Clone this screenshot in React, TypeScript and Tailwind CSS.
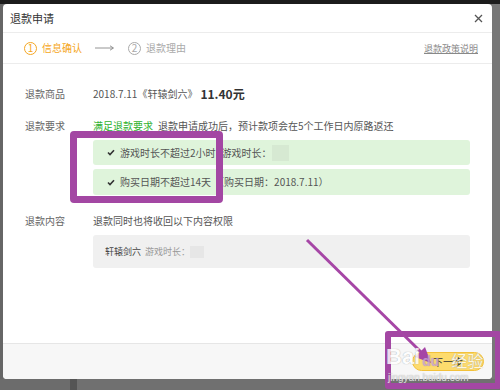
import React from "react";

function Check() {
  return (
    <svg width="8" height="7" viewBox="0 0 8 7" className="shrink-0">
      <polyline points="1,3.5 3,5.5 7,1.2" fill="none" stroke="#333" strokeWidth="1.6" />
    </svg>
  );
}

export default function App() {
  return (
    <div className="relative w-[500px] h-[390px] overflow-hidden bg-[#717171] flex flex-col font-['Noto_Sans_CJK_SC','Liberation_Sans',sans-serif]">
      <div className="h-[4px] bg-[#1c1c1c] shrink-0" />
      <div className="flex shrink-0">
        <div className="w-[3px] bg-[#666]" />
        <div className="w-[489px] h-[375px] bg-white rounded-[4px] flex flex-col overflow-hidden">
          {/* header */}
          <div className="h-[29px] flex items-center justify-between pl-[7px] pr-[9px] border-b border-[#ececec] shrink-0">
            <span className="text-[11px] text-[#333] leading-none">退款申请</span>
            <svg width="9" height="9" viewBox="0 0 9 9">
              <path d="M1 1 L8 8 M8 1 L1 8" stroke="#555" strokeWidth="1.3" />
            </svg>
          </div>
          {/* steps */}
          <div className="h-[31px] flex items-center pl-[21px] pr-[14px] border-b border-[#ececec] shrink-0">
            <div className="flex items-center text-[#f5a623]">
              <span className="w-[13px] h-[13px] rounded-full border border-[#f5a623] flex items-center justify-center text-[10px] leading-none">1</span>
              <span className="ml-[5px] text-[10px] leading-none">信息确认</span>
            </div>
            <svg width="20" height="6" viewBox="0 0 20 6" className="ml-[13px]">
              <path d="M0 3 H18 M15 0.8 L18.5 3 L15 5.2" fill="none" stroke="#888" strokeWidth="0.9" />
            </svg>
            <div className="flex items-center text-[#aaa] ml-[13px]">
              <span className="w-[13px] h-[13px] rounded-full border border-[#aaa] flex items-center justify-center text-[10px] leading-none">2</span>
              <span className="ml-[5px] text-[10px] leading-none">退款理由</span>
            </div>
            <span className="ml-auto text-[9px] text-[#888] underline leading-none">退款政策说明</span>
          </div>
          {/* content */}
          <div className="flex-1 pl-[22px] pr-[22px] pt-[22px] text-[10px] text-[#555] leading-[16px]">
            <div className="flex items-center">
              <span className="w-[68px] shrink-0 text-[#666]">退款商品</span>
              <span className="text-[#555]">2018.7.11《轩辕剑六》</span>
              <span className="ml-[3px] text-[12px] font-bold text-[#333]">11.40元</span>
            </div>
            <div className="flex mt-[16px]">
              <span className="w-[68px] shrink-0 text-[#666]">退款要求</span>
              <div className="flex-1 flex flex-col">
                <div>
                  <span className="text-[#2fb12f]">满足退款要求</span>
                  <span className="ml-[5px]">退款申请成功后，预计款项会在5个工作日内原路返还</span>
                </div>
                <div className="mt-[6px] h-[25px] rounded-[3px] bg-[#dff4db] flex items-center pl-[14px] text-[#555]">
                  <Check />
                  <span className="ml-[5px]">游戏时长不超过2小时</span>
                  <span className="ml-[6px]">游戏时长：</span>
                  <span className="w-[17px] h-[16px] bg-[#d3e6cf] opacity-80" />
                </div>
                <div className="mt-[4px] h-[26px] rounded-[3px] bg-[#dff4db] flex items-center pl-[14px] text-[#555]">
                  <Check />
                  <span className="ml-[5px]">购买日期不超过14天</span>
                  <span className="ml-[3px]">（购买日期：2018.7.11）</span>
                </div>
              </div>
            </div>
            <div className="flex mt-[18px]">
              <span className="w-[68px] shrink-0 text-[#666]">退款内容</span>
              <div className="flex-1 flex flex-col">
                <span>退款同时也将收回以下内容权限</span>
                <div className="mt-[6px] h-[33px] rounded-[3px] bg-[#f0f0f0] flex items-center pl-[12px] text-[9px]">
                  <span className="text-[#444]">轩辕剑六</span>
                  <span className="ml-[4px] text-[#999]">游戏时长：</span>
                  <span className="w-[14px] h-[12px] bg-[#e6e6e6]" />
                </div>
              </div>
            </div>
          </div>
          {/* footer */}
          <div className="h-[36px] bg-[#f7f7f7] border-t border-[#e6e6e6] flex items-center justify-end pr-[8px] shrink-0">
            <button className="w-[72px] h-[19px] rounded-full bg-[#fddb6d] border border-[#f3c13a] text-[10px] leading-none text-[#333]">
              下一步
            </button>
          </div>
        </div>
        <div className="flex-1 bg-[#777]" />
      </div>
      <div className="flex-1 flex">
        <div className="w-[70px] bg-[#6c6c6c]" />
        <div className="w-[7px] bg-[#555]" />
        <div className="flex-1 bg-[#707070]" />
      </div>

      {/* annotations */}
      <div className="absolute left-[70px] top-[131px] w-[153px] h-[72px] border-[7px] border-[#a347a3] rounded-[4px]" />
      <div className="absolute left-[385px] top-[331px] w-[116px] h-[58px] border-[6px] border-[#a347a3] rounded-[3px]" />
      <svg className="absolute left-0 top-0 pointer-events-none" width="500" height="390" viewBox="0 0 500 390">
        <line x1="307" y1="240" x2="421" y2="352" stroke="#a646a6" strokeWidth="3" />
        <polygon points="431,363 415,357 425,347" fill="#a646a6" />
      </svg>
      {/* watermark */}
      <div className="absolute left-[386px] top-[346px] flex items-end pointer-events-none opacity-80">
        <span className="text-[22px] leading-none font-bold text-white [text-shadow:0_0_1px_#888] font-['Liberation_Sans',sans-serif]">Bai</span>
        <span className="text-[14px] leading-none font-bold text-[#c9a0d9] [text-shadow:0_0_1px_#888] font-['Liberation_Sans',sans-serif] ml-[2px]">du</span>
        <span className="ml-[12px] text-[16px] leading-none text-white [text-shadow:0_0_1px_#888]">经验</span>
      </div>
      <div className="absolute left-[388px] top-[373px] text-[10px] leading-none text-white/70 [text-shadow:0_0_1px_#999] font-['Liberation_Sans',sans-serif] pointer-events-none">
        jingyan.baidu.com
      </div>
    </div>
  );
}
